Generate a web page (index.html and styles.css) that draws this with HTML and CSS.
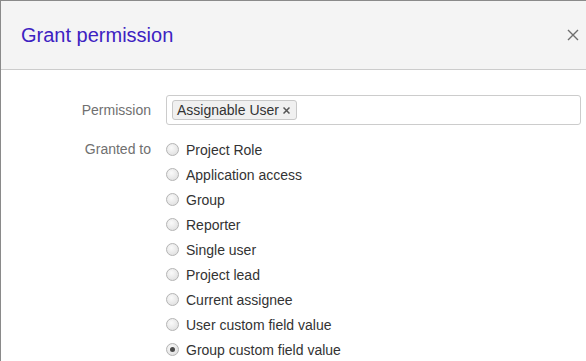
FILE: index.html
```html
<!DOCTYPE html>
<html lang="en">
<head>
    <meta charset="UTF-8">
    <meta name="viewport" content="width=device-width, initial-scale=1.0">
    <title>Grant permission</title>
    <link rel="stylesheet" href="styles.css">
</head>
<body>

    <div class="dialog">
        <!-- Cabeçalho do diálogo -->
        <div class="dialog-header">
            <h2>Grant permission</h2>
            <svg class="close" width="12" height="12" viewBox="0 0 12 12">
                <path d="M1 1 L11 11 M11 1 L1 11" stroke="#6e6e6e" stroke-width="1.4" fill="none"/>
            </svg>
        </div>

        <!-- Formulário -->
        <div class="dialog-body">
            <div class="field">
                <label class="field-label">Permission</label>
                <div class="select-box">
                    <span class="tag">Assignable User
                        <svg class="tag-remove" width="7" height="7" viewBox="0 0 7 7">
                            <path d="M0.5 0.5 L6.5 6.5 M6.5 0.5 L0.5 6.5" stroke="#555" stroke-width="1.5" fill="none"/>
                        </svg>
                    </span>
                </div>
            </div>

            <div class="field">
                <label class="field-label granted">Granted to</label>
                <div class="options">
                    <label class="option"><input type="radio" name="grant"> Project Role</label>
                    <label class="option"><input type="radio" name="grant"> Application access</label>
                    <label class="option"><input type="radio" name="grant"> Group</label>
                    <label class="option"><input type="radio" name="grant"> Reporter</label>
                    <label class="option"><input type="radio" name="grant"> Single user</label>
                    <label class="option"><input type="radio" name="grant"> Project lead</label>
                    <label class="option"><input type="radio" name="grant"> Current assignee</label>
                    <label class="option"><input type="radio" name="grant"> User custom field value</label>
                    <label class="option"><input type="radio" name="grant" checked> Group custom field value</label>
                </div>
            </div>
        </div>
    </div>

</body>
</html>
```

FILE: styles.css
```css
/* Estilo global */
body {
    margin: 0;
    padding: 0;
    font-family: Arial, "Liberation Sans", sans-serif;
    font-size: 14px;
    color: #333;
    background-color: #fff;
    overflow: hidden;
}

.dialog {
    border-top: 1px solid #8a8a8a;
    border-left: 1px solid #8a8a8a;
    height: 360px;
}

/* Cabeçalho */
.dialog-header {
    height: 68px;
    background-color: #f4f4f4;
    border-bottom: 1px solid #cccccc;
    display: flex;
    align-items: center;
    justify-content: space-between;
    padding: 0 7px 0 20px;
}

.dialog-header h2 {
    margin: 0;
    font-size: 20px;
    font-weight: normal;
    color: #3d22c2;
}

.close {
    display: block;
}

/* Corpo */
.dialog-body {
    padding-top: 25px;
}

.field {
    display: flex;
    align-items: flex-start;
    margin-bottom: 12px;
}

.field-label {
    width: 150px;
    margin-right: 15px;
    text-align: right;
    color: #707070;
    line-height: 30px;
}

.field-label.granted {
    line-height: 25px;
}

.select-box {
    flex: 1;
    height: 28px;
    margin-right: 5px;
    border: 1px solid #cccccc;
    border-radius: 3px;
    display: flex;
    align-items: center;
    padding-left: 5px;
}

.tag {
    display: inline-flex;
    align-items: center;
    height: 18px;
    padding: 0 6px 0 4px;
    background-color: #f0f0f0;
    border: 1px solid #c8c8c8;
    border-radius: 3px;
    color: #333;
}

.tag-remove {
    display: block;
    margin-left: 4px;
}

/* Opções de rádio */
.options {
    display: flex;
    flex-direction: column;
}

.option {
    display: flex;
    align-items: center;
    height: 25px;
    color: #333;
}

.option input {
    appearance: none;
    -webkit-appearance: none;
    width: 13px;
    height: 13px;
    margin: 0 7px 0 0;
    border: 1px solid #b4b4b4;
    border-radius: 50%;
    background: radial-gradient(circle at 40% 35%, #fafafa 0%, #e4e4e4 70%, #d8d8d8 100%);
    box-sizing: border-box;
    position: relative;
}

.option input:checked::after {
    content: "";
    position: absolute;
    left: 3px;
    top: 3px;
    width: 5px;
    height: 5px;
    border-radius: 50%;
    background-color: #4a4a4a;
}
```
